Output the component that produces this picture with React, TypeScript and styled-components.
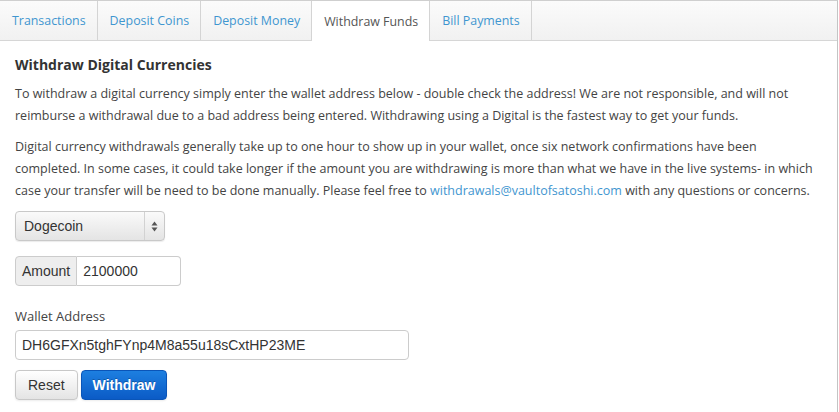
import React from "react";
import styled, { createGlobalStyle } from "styled-components";

const Global = createGlobalStyle`
  html, body { margin: 0; padding: 0; background: #fff; }
  body { font-family: "Open Sans", "DejaVu Sans", sans-serif; }
`;

const Panel = styled.div`
  width: 838px;
  height: 412px;
  border-top: 1px solid #cfcfcf;
  border-right: 1px solid #c4c4c4;
  box-sizing: border-box;
`;

const TabBar = styled.div`
  display: flex;
  height: 39px;
  background: linear-gradient(#fbfbfb, #f1f1f1);
  border-bottom: 1px solid #d6d6d6;
`;

const Tab = styled.div<{ $active?: boolean }>`
  display: flex;
  align-items: center;
  padding: 0 11px 0 12px;
  height: ${(p) => (p.$active ? "40px" : "39px")};
  border-right: 1px solid #d4d4d4;
  font-size: 12.4px;
  color: ${(p) => (p.$active ? "#555" : "#3f96d0")};
  background: ${(p) => (p.$active ? "#fff" : "transparent")};
  box-sizing: border-box;
  white-space: nowrap;
`;

const Content = styled.div`
  padding: 14px 15px 0 15px;
  color: #444;
`;

const Heading = styled.h3`
  margin: 0 0 8px 0;
  font-size: 14px;
  line-height: 20px;
  font-weight: 700;
  color: #333;
`;

const Para = styled.p`
  margin: 0 0 9px 0;
  font-size: 12.5px;
  line-height: 22px;
  white-space: nowrap;
`;

const Link = styled.a`
  color: #3f96d0;
  text-decoration: none;
`;

const Form = styled.div`
  display: flex;
  flex-direction: column;
  align-items: flex-start;
  margin-top: 9px;
  font-family: "Liberation Sans", Arial, sans-serif;
`;

const Select = styled.div`
  display: flex;
  width: 150px;
  height: 30px;
  box-sizing: border-box;
  border: 1px solid #c9c9c9;
  border-radius: 4px;
  background: linear-gradient(#fafafa, #e4e4e4);
  box-shadow: 0 1px 1px rgba(0, 0, 0, 0.08);
  font-size: 14px;
  color: #333;
`;

const SelectText = styled.div`
  flex: 1;
  display: flex;
  align-items: center;
  padding-left: 8px;
`;

const SelectArrows = styled.div`
  width: 19px;
  border-left: 1px solid #d2d2d2;
  display: flex;
  align-items: center;
  justify-content: center;
`;

const InputGroup = styled.div`
  display: flex;
  margin-top: 15px;
  height: 30px;
`;

const Addon = styled.div`
  display: flex;
  align-items: center;
  padding: 0 6px;
  background: #eee;
  border: 1px solid #ccc;
  border-radius: 4px 0 0 4px;
  font-size: 14px;
  color: #333;
`;

const Input = styled.div<{ $w: number; $grouped?: boolean }>`
  display: flex;
  align-items: center;
  width: ${(p) => p.$w}px;
  height: 30px;
  box-sizing: border-box;
  padding: 0 6px;
  border: 1px solid #ccc;
  border-left: ${(p) => (p.$grouped ? "none" : "1px solid #ccc")};
  border-radius: ${(p) => (p.$grouped ? "0 4px 4px 0" : "4px")};
  font-size: 14px;
  color: #333;
  background: #fff;
`;

const Label = styled.div`
  margin-top: 21px;
  margin-bottom: 5px;
  font-family: "Open Sans", sans-serif;
  font-size: 13px;
  line-height: 18px;
  color: #444;
`;

const Buttons = styled.div`
  display: flex;
  gap: 3px;
  margin-top: 10px;
`;

const Button = styled.div<{ $primary?: boolean }>`
  display: flex;
  align-items: center;
  justify-content: center;
  height: 30px;
  box-sizing: border-box;
  padding: 0 ${(p) => (p.$primary ? "11px" : "12px")};
  border-radius: 4px;
  font-size: 14px;
  border: 1px solid ${(p) => (p.$primary ? "#0a55b8" : "#c8c8c8")};
  background: ${(p) =>
    p.$primary
      ? "linear-gradient(#1d7fe0, #0b5bc6)"
      : "linear-gradient(#ffffff, #e4e4e4)"};
  color: ${(p) => (p.$primary ? "#fff" : "#333")};
  font-weight: ${(p) => (p.$primary ? 700 : 400)};
  text-shadow: ${(p) => (p.$primary ? "0 -1px 0 rgba(0,0,0,0.25)" : "none")};
  box-shadow: 0 1px 2px rgba(0, 0, 0, 0.08);
`;

export default function App() {
  return (
    <>
      <Global />
      <Panel>
        <TabBar>
          <Tab>Transactions</Tab>
          <Tab>Deposit Coins</Tab>
          <Tab>Deposit Money</Tab>
          <Tab $active>Withdraw Funds</Tab>
          <Tab>Bill Payments</Tab>
        </TabBar>
        <Content>
          <Heading>Withdraw Digital Currencies</Heading>
          <Para>
            To withdraw a digital currency simply enter the wallet address below - double check the address! We are not responsible, and will not
            <br />
            reimburse a withdrawal due to a bad address being entered. Withdrawing using a Digital is the fastest way to get your funds.
          </Para>
          <Para>
            Digital currency withdrawals generally take up to one hour to show up in your wallet, once six network confirmations have been
            <br />
            completed. In some cases, it could take longer if the amount you are withdrawing is more than what we have in the live systems- in which
            <br />
            case your transfer will be need to be done manually. Please feel free to{" "}
            <Link href="#">withdrawals@vaultofsatoshi.com</Link> with any questions or concerns.
          </Para>
          <Form>
            <Select>
              <SelectText>Dogecoin</SelectText>
              <SelectArrows>
                <svg width="7" height="11" viewBox="0 0 7 11">
                  <path d="M3.5 0.5 L6.5 4.5 L0.5 4.5 Z" fill="#555" />
                  <path d="M3.5 10.5 L6.5 6.5 L0.5 6.5 Z" fill="#555" />
                </svg>
              </SelectArrows>
            </Select>
            <InputGroup>
              <Addon>Amount</Addon>
              <Input $w={104} $grouped>2100000</Input>
            </InputGroup>
            <Label>Wallet Address</Label>
            <Input $w={394}>DH6GFXn5tghFYnp4M8a55u18sCxtHP23ME</Input>
            <Buttons>
              <Button>Reset</Button>
              <Button $primary>Withdraw</Button>
            </Buttons>
          </Form>
        </Content>
      </Panel>
    </>
  );
}
